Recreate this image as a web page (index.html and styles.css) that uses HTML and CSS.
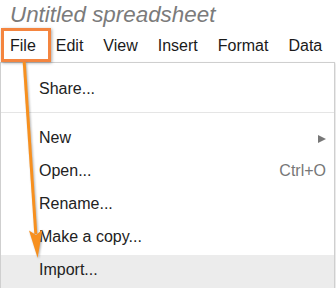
FILE: index.html
```html
<!DOCTYPE html>
<html>

<head>
  <meta name="viewport" content="width=device-width, initial-scale=1">
  <link rel="stylesheet" href="styles.css">
</head>

<body>
  <div class="doc-title">Untitled spreadsheet</div>

  <div class="menubar">
    <span class="menu-item">File</span>
    <span class="menu-item">Edit</span>
    <span class="menu-item">View</span>
    <span class="menu-item">Insert</span>
    <span class="menu-item">Format</span>
    <span class="menu-item">Data</span>
    <div class="callout"></div>
  </div>

  <div class="dropdown">
    <div class="item">Share...</div>
    <div class="separator"></div>
    <div class="item"><span>New</span><span class="submenu"></span></div>
    <div class="item"><span>Open...</span><span class="shortcut">Ctrl+O</span></div>
    <div class="item">Rename...</div>
    <div class="item">Make a copy...</div>
    <div class="item active">Import...</div>
  </div>

  <svg class="arrow" width="336" height="289" viewBox="0 0 336 289">
    <line x1="24.2" y1="62" x2="35.8" y2="234" stroke="#f7901f" stroke-width="3" />
    <polygon points="37.6,258 29,230.6 36,235 42.4,229.8" fill="#f7901f" />
  </svg>
</body>

</html>
```

FILE: styles.css
```css
/* ----------App-Shell--------------- */
body {
  margin: 0px;
  padding: 0px;
  font-family: "Liberation Sans", Arial, sans-serif;
  font-size: 16px;
  color: #222;
  background: #fff;
  overflow: hidden;
}

.doc-title {
  padding: 2px 0 0 10px;
  font-size: 22.4px;
  line-height: 26px;
  font-style: italic;
  color: #7b7b7b;
}

.menubar {
  position: relative;
  display: flex;
  flex-direction: row;
  padding: 8px 0 6px 0;
}

.menu-item {
  padding: 0 10px;
  line-height: 20px;
  color: #1a1a1a;
}

/* orange annotation box round "File" */
.callout {
  position: absolute;
  left: 1px;
  top: 0px;
  width: 50px;
  height: 34px;
  box-sizing: border-box;
  border: 3px solid #f4853f;
  box-shadow: 1px 1px 3px rgba(0, 0, 0, 0.35);
  z-index: 3;
}

/* --------------dropdown---------------------------- */
.dropdown {
  width: 335px;
  box-sizing: border-box;
  border: 1px solid #cfcfcf;
  border-bottom: none;
  padding-top: 11px;
  box-shadow: 1px 1px 2px rgba(0, 0, 0, 0.12);
}

.item {
  display: flex;
  flex-direction: row;
  justify-content: space-between;
  align-items: baseline;
  padding: 5px 8px 9px 38px;
  line-height: 19px;
}

.item.active {
  background-color: #ececec;
}

.separator {
  height: 1px;
  background-color: #e5e5e5;
  margin: 5px 0 10px 0;
}

.shortcut {
  color: #777;
}

.submenu {
  align-self: center;
  margin-top: 2px;
  width: 0;
  height: 0;
  border-left: 8px solid #777;
  border-top: 4px solid transparent;
  border-bottom: 4px solid transparent;
}

.arrow {
  position: absolute;
  left: 0;
  top: 0;
  pointer-events: none;
  filter: drop-shadow(1px 1px 1px rgba(0, 0, 0, 0.3));
  z-index: 5;
}
```
